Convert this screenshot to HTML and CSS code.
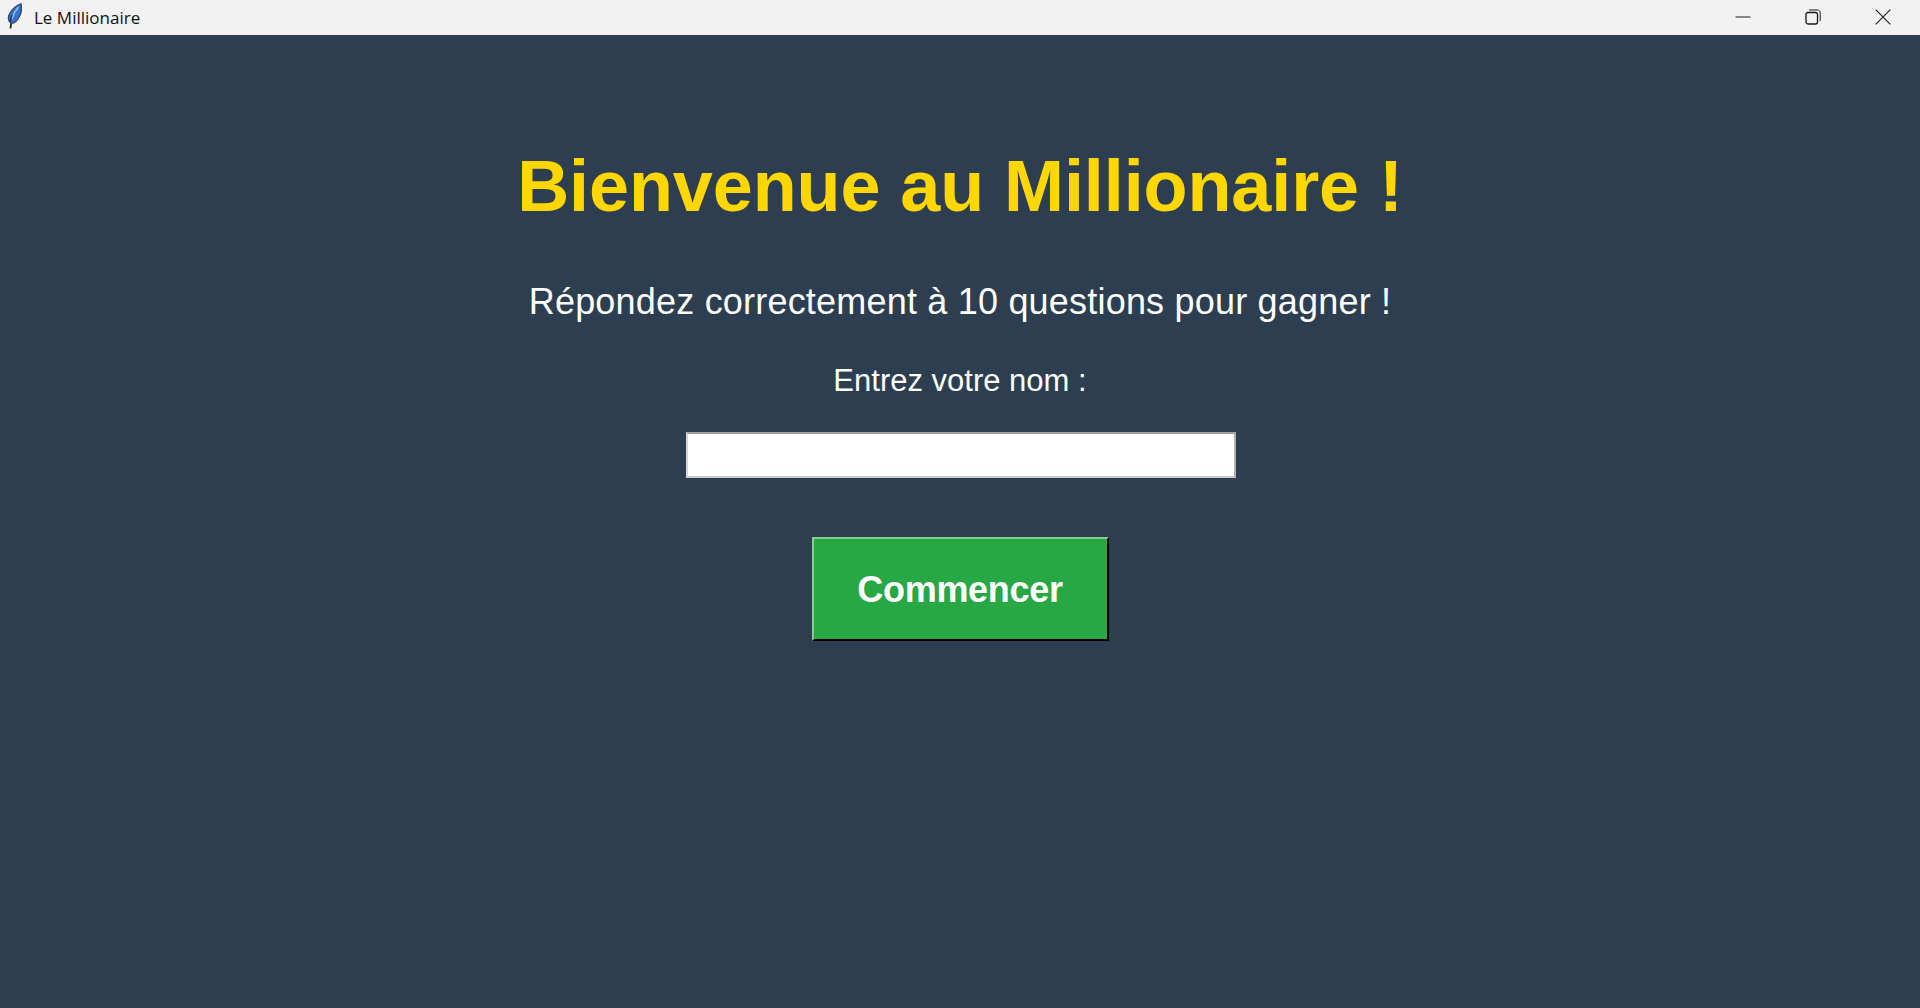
FILE: index.html
```html
<!DOCTYPE html>
<html lang="fr">
<head>
    <meta charset="UTF-8">
    <title>Le Millionaire</title>
    <link rel="stylesheet" href="styles.css">
</head>
<body>
    <div class="titlebar">
        <svg class="app-icon" width="16" height="26" viewBox="0 0 16 26">
            <path d="M4.5 25.5 L5.5 17" stroke="#20242c" stroke-width="1.8" fill="none"/>
            <path d="M5 20.5 C1.5 18 1.5 13 4.5 9 C7.5 5 11 2 15 0.8 C16 5.5 15.5 10.5 13 14.5 C11 18 8 20.5 5 20.5 Z" fill="#2f72cf" stroke="#3a4258" stroke-width="1.2"/>
            <path d="M6 16 C7 12 9 8 12.5 4" stroke="#8fbdee" stroke-width="1.6" fill="none"/>
            <path d="M4 19 L6 12" stroke="#1c2c4c" stroke-width="1.2" fill="none"/>
        </svg>
        <span class="app-title">Le Millionaire</span>
        <div class="window-controls">
            <button class="window-btn">
                <svg width="16" height="16" viewBox="0 0 16 16"><path d="M0.5 8 H15.5" stroke="#1a1a1a" stroke-width="1" fill="none"/></svg>
            </button>
            <button class="window-btn">
                <svg width="16" height="16" viewBox="0 0 16 16"><rect x="1" y="3.5" width="11.5" height="11.5" rx="2" stroke="#1a1a1a" stroke-width="1.3" fill="none"/><path d="M4 1 H12.5 C14 1 15.2 2.2 15.2 3.7 V12" stroke="#1a1a1a" stroke-width="1" fill="none"/></svg>
            </button>
            <button class="window-btn">
                <svg width="16" height="16" viewBox="0 0 16 16"><path d="M0.7 0.7 L15.3 15.3 M15.3 0.7 L0.7 15.3" stroke="#1a1a1a" stroke-width="1.1" fill="none"/></svg>
            </button>
        </div>
    </div>
    <div class="main-content">
        <h1>Bienvenue au Millionaire !</h1>
        <p class="intro">Répondez correctement à 10 questions pour gagner !</p>
        <label class="name-label" for="name">Entrez votre nom :</label>
        <input class="name-input" id="name" type="text">
        <button class="start-btn">Commencer</button>
    </div>
</body>
</html>
```

FILE: styles.css
```css
html, body {
    height: 100%;
}
body {
    margin: 0;
    display: flex;
    flex-direction: column;
    background-color: #2c3e50;
    font-family: "Liberation Sans", Arial, sans-serif;
    overflow: hidden;
}
.titlebar {
    height: 35px;
    flex: none;
    display: flex;
    align-items: center;
    background-color: #f2f2f2;
    padding-left: 6px;
}
.app-icon {
    margin-right: 12px;
    margin-bottom: 3px;
}
.app-title {
    font-family: "Open Sans", sans-serif;
    font-size: 17px;
    color: #111;
}
.window-controls {
    margin-left: auto;
    display: flex;
    padding-right: 2px;
    margin-bottom: 2px;
}
.window-btn {
    width: 70px;
    height: 33px;
    border: none;
    background: none;
    padding: 0;
    display: flex;
    align-items: center;
    justify-content: center;
}
.main-content {
    flex: 1;
    display: flex;
    flex-direction: column;
    align-items: center;
    color: white;
}
h1 {
    margin: 110px 0 0;
    font-size: 72px;
    letter-spacing: -0.1px;
    line-height: 83px;
    font-weight: bold;
    color: #ffd700;
}
.intro {
    margin: 53px 0 0;
    font-size: 36px;
    letter-spacing: 0.2px;
    line-height: 41px;
}
.name-label {
    margin-top: 41px;
    font-size: 31px;
    line-height: 35px;
}
.name-input {
    box-sizing: border-box;
    width: 550px;
    height: 46px;
    margin: 34px 0 0 2px;
    border: 2px solid;
    border-color: #a0a0a0 #b0b0b0 #c8c8c8 #d8d8d8;
    background-color: white;
}
.start-btn {
    box-sizing: border-box;
    width: 297px;
    height: 104px;
    margin-top: 59px;
    padding-top: 2px;
    border: 2px solid;
    border-color: #7fd08f #000 #000 #7fd08f;
    background-color: #28a745;
    color: white;
    font-family: "Liberation Sans", Arial, sans-serif;
    font-size: 36px;
    letter-spacing: -0.3px;
    font-weight: bold;
}
```
